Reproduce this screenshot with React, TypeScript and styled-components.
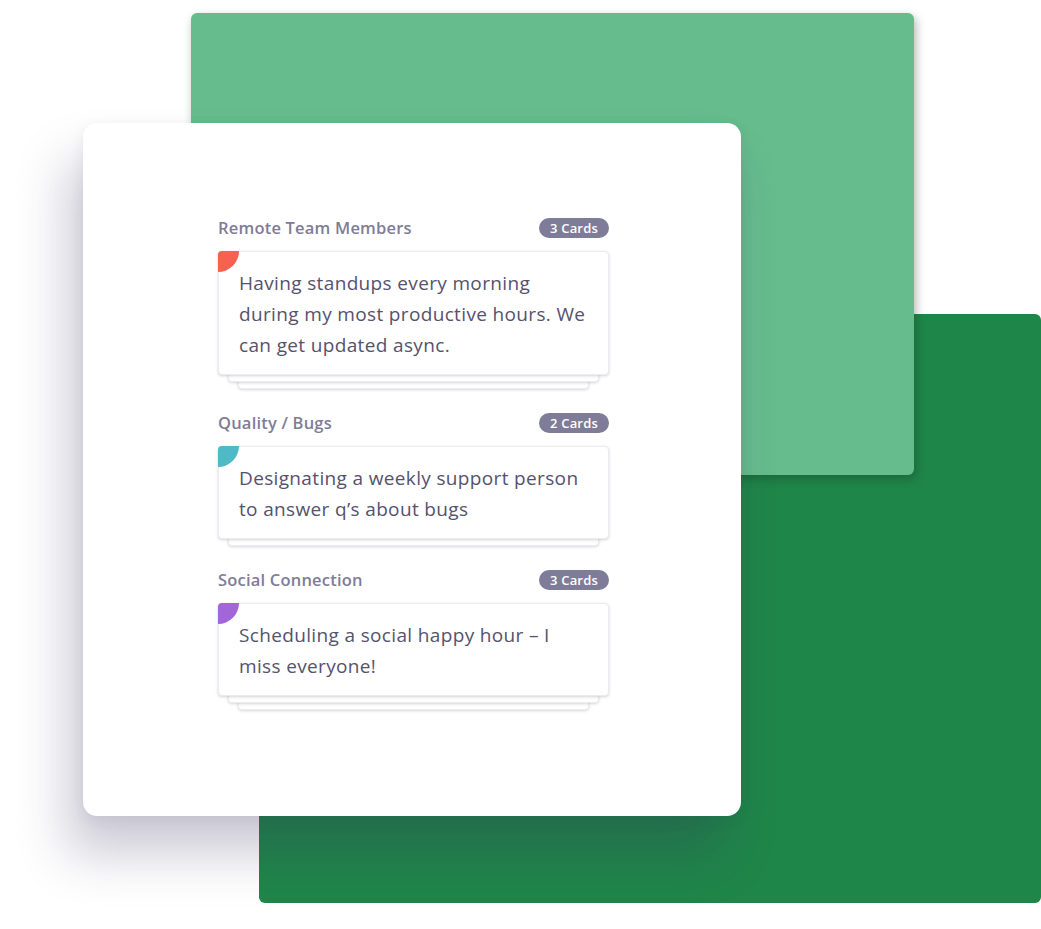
import React from "react";
import styled, { createGlobalStyle } from "styled-components";

const Global = createGlobalStyle`
  html, body { margin: 0; padding: 0; background: #ffffff; }
  body { font-family: "Open Sans", "Liberation Sans", sans-serif; }
  * { box-sizing: border-box; }
`;

const Stage = styled.div`
  position: relative;
  width: 1041px;
  height: 929px;
  overflow: hidden;
  background: #ffffff;
`;

const Backdrop = styled.div<{ $x: number; $y: number; $w: number; $h: number; $bg: string; $shadow: string }>`
  position: absolute;
  left: ${(p) => p.$x}px;
  top: ${(p) => p.$y}px;
  width: ${(p) => p.$w}px;
  height: ${(p) => p.$h}px;
  background: ${(p) => p.$bg};
  border-radius: 6px;
  box-shadow: ${(p) => p.$shadow};
`;

const Sheet = styled.div`
  position: absolute;
  left: 83px;
  top: 123px;
  width: 658px;
  height: 693px;
  background: #ffffff;
  border-radius: 14px;
  box-shadow: -16px 38px 50px rgba(50, 48, 90, 0.25), 0 4px 14px rgba(50, 48, 90, 0.08);
  padding: 95px 0 0 135px;
`;

const Board = styled.div`
  width: 391px;
  display: flex;
  flex-direction: column;
  gap: 24px;
`;

const Group = styled.section`
  display: flex;
  flex-direction: column;
  gap: 13px;
`;

const Header = styled.div`
  display: flex;
  align-items: center;
  justify-content: space-between;
  height: 20px;
`;

const Title = styled.h3`
  margin: 0;
  font-size: 16.5px;
  line-height: 20px;
  font-weight: 600;
  color: #7f7c97;
  letter-spacing: 0.2px;
`;

const Badge = styled.span`
  display: inline-flex;
  align-items: center;
  height: 20px;
  padding: 0 11px;
  border-radius: 10px;
  background: #7f7c99;
  color: #ffffff;
  font-size: 13px;
  font-weight: 600;
  letter-spacing: 0.2px;
`;

const Pile = styled.div`
  display: flex;
  flex-direction: column;
  align-items: center;
`;

const Card = styled.div`
  position: relative;
  width: 100%;
  background: #ffffff;
  border-radius: 4px;
  border: 1px solid #ececf0;
  box-shadow: 0 1px 3px rgba(60, 58, 90, 0.22);
  padding: 16px 20px 13px 20px;
  z-index: 3;
`;

const Corner = styled.span<{ $color: string }>`
  position: absolute;
  left: -1px;
  top: -1px;
  width: 21px;
  height: 21px;
  background: ${(p) => p.$color};
  border-radius: 4px 0 100% 0;
`;

const CardText = styled.p`
  margin: 0;
  font-size: 19px;
  line-height: 31px;
  color: #55526c;
  letter-spacing: 0.35px;
`;

const Strip = styled.div<{ $inset: number; $z: number }>`
  width: calc(100% - ${(p) => p.$inset * 2}px);
  height: 11px;
  margin-top: -4px;
  background: #ffffff;
  border-radius: 0 0 4px 4px;
  border: 1px solid #ececf0;
  border-top: none;
  box-shadow: 0 1px 3px rgba(60, 58, 90, 0.2);
  position: relative;
  z-index: ${(p) => p.$z};
`;

type Column = { title: string; count: number; color: string; text: string; extra: number };

const columns: Column[] = [
  {
    title: "Remote Team Members",
    count: 3,
    color: "#f8604f",
    text: "Having standups every morning during my most productive hours. We can get updated async.",
    extra: 2,
  },
  {
    title: "Quality / Bugs",
    count: 2,
    color: "#4fb9c6",
    text: "Designating a weekly support person to answer q’s about bugs",
    extra: 1,
  },
  {
    title: "Social Connection",
    count: 3,
    color: "#a266d9",
    text: "Scheduling a social happy hour – I miss everyone!",
    extra: 2,
  },
];

export default function App() {
  return (
    <Stage>
      <Global />
      <Backdrop $x={259} $y={314} $w={782} $h={589} $bg="#1f8649" $shadow="none" />
      <Backdrop
        $x={191}
        $y={13}
        $w={723}
        $h={462}
        $bg="#66bc8d"
        $shadow="2px 4px 10px rgba(20, 50, 30, 0.35)"
      />
      <Sheet>
        <Board>
          {columns.map((c) => (
            <Group key={c.title}>
              <Header>
                <Title>{c.title}</Title>
                <Badge>{c.count} Cards</Badge>
              </Header>
              <Pile>
                <Card>
                  <Corner $color={c.color} />
                  <CardText>{c.text}</CardText>
                </Card>
                {Array.from({ length: c.extra }).map((_, i) => (
                  <Strip key={i} $inset={10 * (i + 1)} $z={2 - i} />
                ))}
              </Pile>
            </Group>
          ))}
        </Board>
      </Sheet>
    </Stage>
  );
}
